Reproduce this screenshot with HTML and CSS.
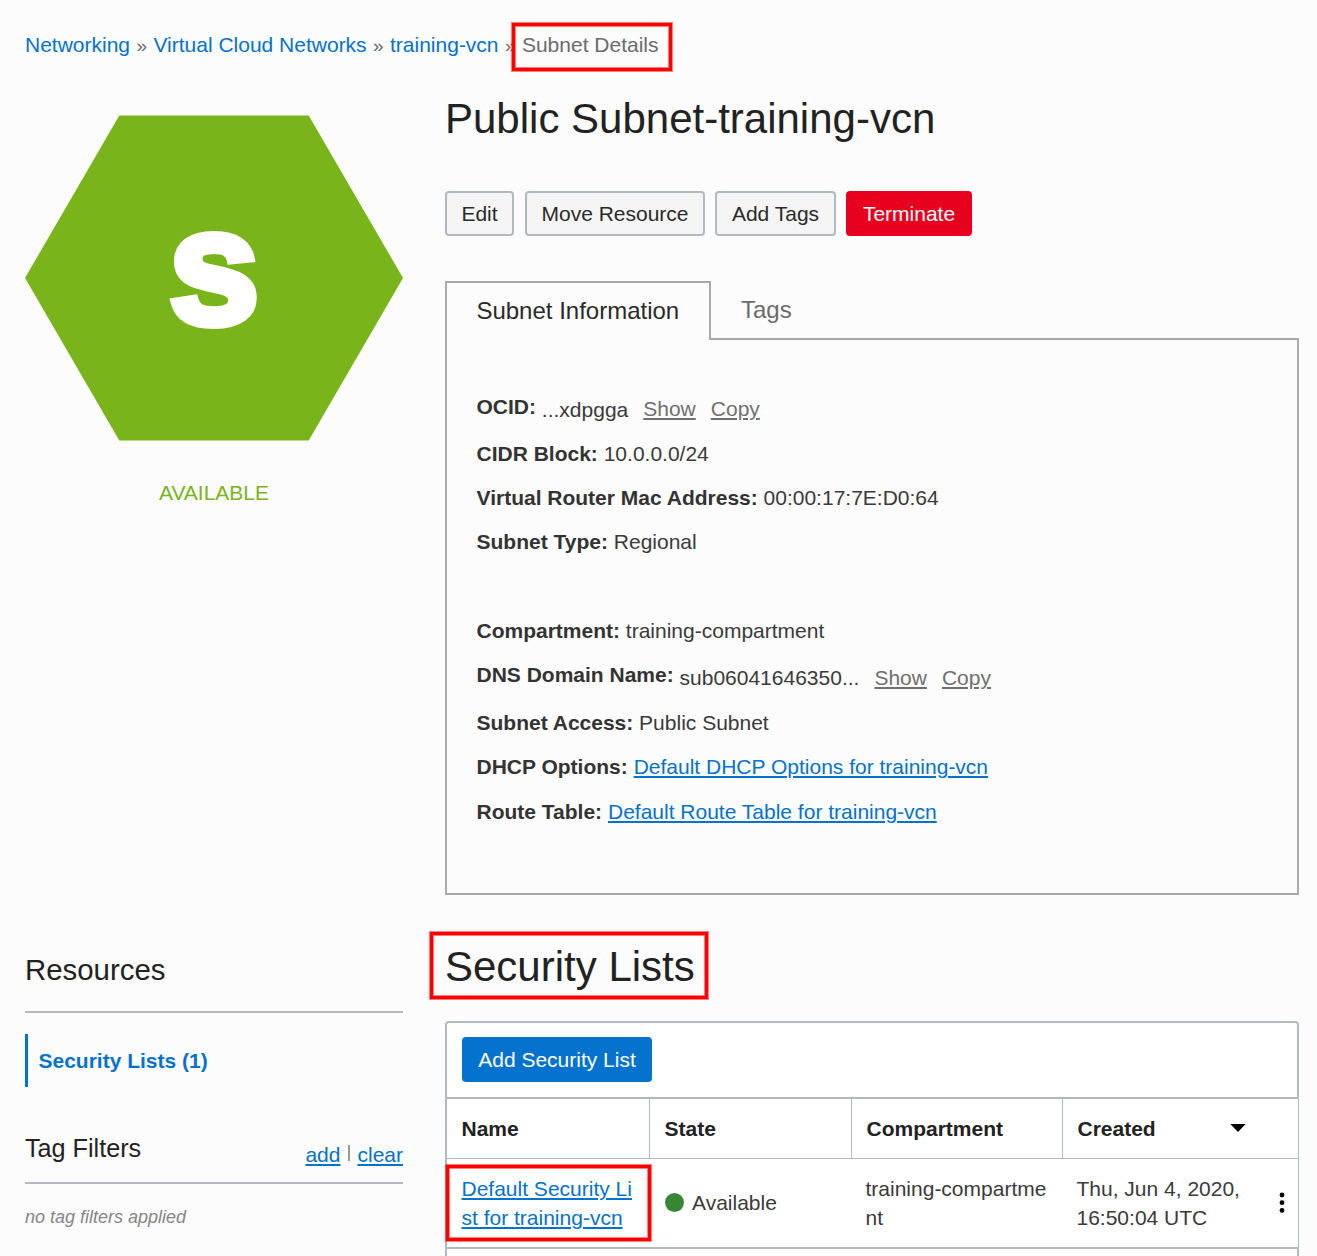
FILE: index.html
```html
<!DOCTYPE html>
<html lang="en">
<head>
<meta charset="utf-8">
<title>Subnet Details</title>
<link rel="stylesheet" href="styles.css">
</head>
<body>
<nav class="breadcrumb"><a href="#">Networking</a> <span class="sep">»</span> <a href="#">Virtual Cloud Networks</a> <span class="sep">»</span> <a href="#">training-vcn</a> <span class="sep">»</span> <span class="current">Subnet Details<i class="mark mark-crumb"></i></span></nav>

<div class="overview">
  <aside class="status">
    <svg class="hexagon" width="378" height="326" viewBox="0 0 378 326">
      <polygon points="0,163 94.3,0.4 283.7,0.4 378,163 283.7,325.4 94.3,325.4" fill="#79b41a"/>
      <text class="hexagon-letter" x="189" y="207.5" text-anchor="middle">s</text>
    </svg>
    <div class="state-label">AVAILABLE</div>
  </aside>
  <main class="details">
    <h1>Public Subnet-training-vcn</h1>
    <div class="actions">
      <button class="btn edit">Edit</button>
      <button class="btn move">Move Resource</button>
      <button class="btn tags">Add Tags</button>
      <button class="btn danger">Terminate</button>
    </div>
    <div class="tabs">
      <div class="tab active">Subnet Information</div>
      <div class="tab">Tags</div>
    </div>
    <div class="panel">
      <div class="row r47"><b>OCID:</b> <span class="short">...xdpgga</span><a class="quiet" href="#">Show</a><a class="quiet" href="#">Copy</a></div>
      <div class="row"><b>CIDR Block:</b> 10.0.0.0/24</div>
      <div class="row"><b>Virtual Router Mac Address:</b> 00:00:17:7E:D0:64</div>
      <div class="row"><b>Subnet Type:</b> Regional</div>
      <div class="row group"><b>Compartment:</b> training-compartment</div>
      <div class="row r48"><b>DNS Domain Name:</b> <span class="short">sub06041646350...</span><a class="quiet low" href="#">Show</a><a class="quiet low" href="#">Copy</a></div>
      <div class="row"><b>Subnet Access:</b> Public Subnet</div>
      <div class="row r45"><b>DHCP Options:</b> <a class="link" href="#">Default DHCP Options for training-vcn</a></div>
      <div class="row"><b>Route Table:</b> <a class="link" href="#">Default Route Table for training-vcn</a></div>
    </div>
  </main>
</div>

<div class="lists">
  <aside class="sidebar">
    <h2>Resources</h2>
    <a class="resource" href="#">Security Lists (1)</a>
    <div class="filters">
      <h3>Tag Filters</h3>
      <div class="filter-links"><a class="link" href="#">add</a><i class="bar"></i><a class="link" href="#">clear</a></div>
    </div>
    <p class="empty">no tag filters applied</p>
  </aside>
  <section class="security">
    <h1><span class="heading">Security Lists<i class="mark mark-heading"></i></span></h1>
    <div class="toolbar"><button class="btn primary">Add Security List</button></div>
    <div class="grid head">
      <div>Name</div>
      <div>State</div>
      <div>Compartment</div>
      <div class="created">Created
        <svg class="caret" width="16" height="8" viewBox="0 0 16 8"><path d="M0.3 0H15.7L8 8Z"/></svg>
      </div>
    </div>
    <div class="grid body">
      <div class="name"><a class="link" href="#">Default Security Li<br>st for training-vcn</a><i class="mark mark-name"></i></div>
      <div class="state"><i class="dot"></i>Available</div>
      <div>training-compartme<br>nt</div>
      <div>Thu, Jun 4, 2020,<br>16:50:04 UTC</div>
      <svg class="kebab" width="6" height="22" viewBox="0 0 6 22"><circle cx="3" cy="3" r="2.4"/><circle cx="3" cy="10.7" r="2.4"/><circle cx="3" cy="18.4" r="2.4"/></svg>
    </div>
    <div class="footer"></div>
  </section>
</div>
</body>
</html>
```

FILE: styles.css
```css
* { box-sizing: border-box; }
body {
  margin: 0;
  width: 1317px;
  height: 1256px;
  overflow: hidden;
  padding: 30px 18px 0 25px;
  background: #fcfcfc;
  color: #3a3a3a;
  font: 21px/30px "Liberation Sans", Arial, sans-serif;
}
a { color: #0572ce; text-decoration: none; }
h1, h2, h3, p { margin: 0; font-weight: 400; color: #222; }
h1 { font-size: 42px; line-height: 48px; }

.breadcrumb { height: 30px; white-space: nowrap; color: #6b6b6b; }
.sep { display: inline-block; width: 11.7px; font-size: 19px; line-height: 20px; text-align: center; }
.current { position: relative; }

/* red callout frames drawn over the page */
.mark {
  position: absolute;
  border: 3px solid #f00;
  box-shadow: 0 0 0 1px rgba(255, 0, 0, .5), inset 0 0 0 1px rgba(255, 0, 0, .5);
  pointer-events: none;
}
.mark-crumb { left: -10px; top: -10px; width: 160px; height: 48px; }
.mark-heading { left: -15px; top: -11px; width: 278px; height: 67px; }
.mark-name { left: -1px; top: 6px; width: 205px; height: 76px; }

.overview, .lists { display: grid; grid-template-columns: 378px 854px; column-gap: 42px; }
.overview { height: 835px; }

.status { padding-top: 55px; text-align: center; }
.hexagon { display: block; }
.hexagon-letter {
  font: bold 163px "Liberation Sans", Arial, sans-serif;
  fill: #fff;
  stroke: #fff;
  stroke-width: 8px;
}
.state-label { margin-top: 37px; color: #79b41a; }

.details { padding-top: 35px; }
.actions { display: flex; margin-top: 48px; }
.btn {
  height: 45px;
  padding: 0;
  border: 2px solid #b3b9c3;
  border-radius: 4px;
  background: #f5f5f5;
  color: #2a2a2a;
  font: inherit;
}
.edit { width: 69px; margin-right: 11px; }
.move { width: 180px; margin-right: 10px; }
.tags { width: 121px; margin-right: 10px; }
.danger { width: 126px; border: 0; background: #e8001f; color: #fff; }
.primary { width: 190px; border: 0; background: #0572ce; color: #fff; }

.tabs { display: flex; height: 59px; margin-top: 45px; font-size: 24px; line-height: 57px; }
.tab { width: 110px; padding-left: 30px; color: #6b6b6b; }
.tab.active {
  z-index: 1;
  width: 266px;
  border: 2px solid #a9a9a9;
  border-bottom: 0;
  padding-left: 29.4px;
  background: #fcfcfc;
  color: #2a2a2a;
  line-height: 55px;
}
.panel {
  height: 557px;
  margin-top: -2px;
  border: 2px solid #a9a9a9;
  padding: 52px 29px 0 29.5px;
}
.row { height: 44px; white-space: nowrap; }
.row.r45 { height: 45px; }
.row.r47 { height: 47px; }
.row.r48 { height: 48px; }
.row.group { margin-top: 45px; }
.row b { color: #333; }
.short { position: relative; top: 3px; }
.quiet { position: relative; top: 2px; margin-left: 15px; color: #6f6f6f; }
.quiet.low { top: 3px; }
.quiet, .link { text-decoration: underline; text-decoration-thickness: 2px; text-underline-offset: 2px; }

.sidebar { padding-top: 58px; }
.sidebar h2 { height: 60px; border-bottom: 2px solid #b3b9c3; font-size: 29.4px; line-height: 34px; }
.resource {
  display: block;
  height: 53px;
  margin-top: 21px;
  border-left: 3px solid #0572ce;
  padding-left: 10.5px;
  font-weight: 700;
  line-height: 53px;
}
.filters {
  display: flex;
  justify-content: space-between;
  height: 51px;
  margin-top: 46px;
  border-bottom: 2px solid #b3b9c3;
}
.filters h3 { font-size: 25.2px; line-height: 30px; }
.filter-links { display: flex; padding-top: 7px; }
.bar { width: 2px; height: 16px; margin: 5px 7.5px 0 7.5px; background: #999; }
.empty { margin-top: 18px; color: #868686; font-size: 18px; font-style: italic; }

.security { padding-top: 48px; }
.heading { position: relative; }
.toolbar {
  height: 78px;
  margin-top: 30px;
  border: 2px solid #b3b9c3;
  border-radius: 4px 4px 0 0;
  padding: 14px 15px;
  background: #fff;
}
.toolbar .btn { display: block; }
.grid {
  display: grid;
  grid-template-columns: 203px 202px 211px 1fr;
  border: solid #b3b9c3;
  border-width: 0 1px 0 2px;
  background: #fff;
}
.head { height: 60px; border-bottom-width: 1px; color: #222; font-weight: 700; line-height: 59px; }
.head > div { padding-left: 14.5px; border-right: 1px solid #b3b9c3; }
.head > .created { display: flex; align-items: center; border-right: 0; }
.caret { margin: -1px 0 0 74.5px; fill: #000; }
.body { position: relative; height: 88px; line-height: 29px; }
.body > div { padding: 15px 0 0 13.5px; white-space: nowrap; }
.body > .name { position: relative; padding-left: 14.5px; }
.body > .state { display: flex; align-items: center; padding: 0 0 1px 15px; }
.dot { width: 19px; height: 19px; margin-right: 8px; border-radius: 50%; background: #368636; }
.kebab { position: absolute; right: 13px; top: 33px; fill: #000; }
.footer { height: 20px; border: 2px solid #b3b9c3; background: #fff; }
```
